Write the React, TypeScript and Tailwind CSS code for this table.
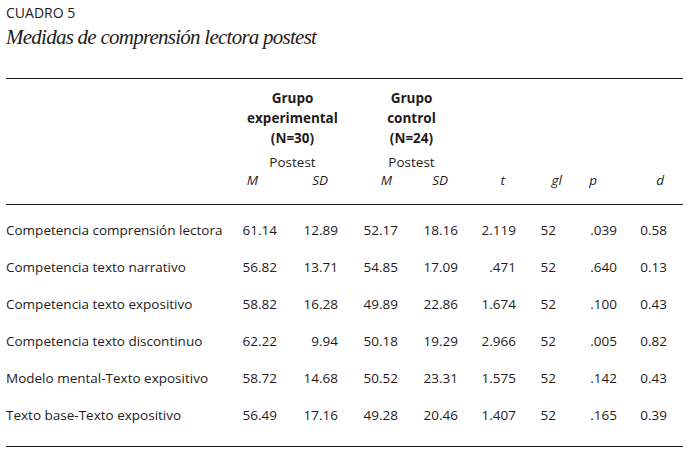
import React from "react";

const rows: [string, string, string, string, string, string, string, string, string][] = [
  ["Competencia comprensión lectora", "61.14", "12.89", "52.17", "18.16", "2.119", "52", ".039", "0.58"],
  ["Competencia texto narrativo", "56.82", "13.71", "54.85", "17.09", ".471", "52", ".640", "0.13"],
  ["Competencia texto expositivo", "58.82", "16.28", "49.89", "22.86", "1.674", "52", ".100", "0.43"],
  ["Competencia texto discontinuo", "62.22", "9.94", "50.18", "19.29", "2.966", "52", ".005", "0.82"],
  ["Modelo mental-Texto expositivo", "58.72", "14.68", "50.52", "23.31", "1.575", "52", ".142", "0.43"],
  ["Texto base-Texto expositivo", "56.49", "17.16", "49.28", "20.46", "1.407", "52", ".165", "0.39"],
];

export default function App() {
  return (
    <div className="w-[687px] h-[451px] bg-white text-[#1f1b1c] font-['Open_Sans',sans-serif] overflow-hidden">
      <div className="pl-[6px] pr-[4px] pt-[4px]">
        <div className="text-[14px] leading-[18px]">CUADRO 5</div>
        <div className="mt-[3px] font-['Liberation_Serif',serif] italic text-[21px] leading-[24px] tracking-[-0.75px]">
          Medidas de comprensión lectora postest
        </div>
        <div className="mt-[29px] h-px bg-[#1f1b1c]" />

        {/* header */}
        <div className="pt-[9px] text-[13.5px]">
          <div className="flex font-bold leading-[20px]">
            <div className="w-[234px]" />
            <div className="w-[105px] text-center">
              <div>Grupo</div>
              <div>experimental</div>
              <div>(N=30)</div>
            </div>
            <div className="w-[133px] text-center">
              <div>Grupo</div>
              <div>control</div>
              <div>(N=24)</div>
            </div>
          </div>
          <div className="mt-[5px] flex leading-[18px]">
            <div className="w-[234px]" />
            <div className="w-[105px] text-center">Postest</div>
            <div className="w-[133px] text-center">Postest</div>
          </div>
          <div className="flex italic leading-[18px]">
            <div className="w-[252px] text-right">M</div>
            <div className="w-[70px] text-right">SD</div>
            <div className="w-[64px] text-right">M</div>
            <div className="w-[56px] text-right">SD</div>
            <div className="w-[57px] text-right">t</div>
            <div className="w-[57px] text-right">gl</div>
            <div className="w-[35px] text-right">p</div>
            <div className="w-[67px] text-right">d</div>
          </div>
        </div>
        <div className="mt-[15px] h-px bg-[#1f1b1c]" />

        {/* body */}
        <div className="pt-[7px] text-[13.5px] leading-[37px]">
          {rows.map((r) => (
            <div key={r[0]} className="flex">
              <div className="w-[228px] whitespace-nowrap">{r[0]}</div>
              <div className="w-[43px] text-right">{r[1]}</div>
              <div className="w-[61px] text-right">{r[2]}</div>
              <div className="w-[60px] text-right">{r[3]}</div>
              <div className="w-[60px] text-right">{r[4]}</div>
              <div className="w-[58px] text-right">{r[5]}</div>
              <div className="w-[40px] text-right">{r[6]}</div>
              <div className="w-[61px] text-right">{r[7]}</div>
              <div className="w-[50px] text-right">{r[8]}</div>
            </div>
          ))}
        </div>
        <div className="mt-[12px] h-px bg-[#1f1b1c]" />
      </div>
    </div>
  );
}
